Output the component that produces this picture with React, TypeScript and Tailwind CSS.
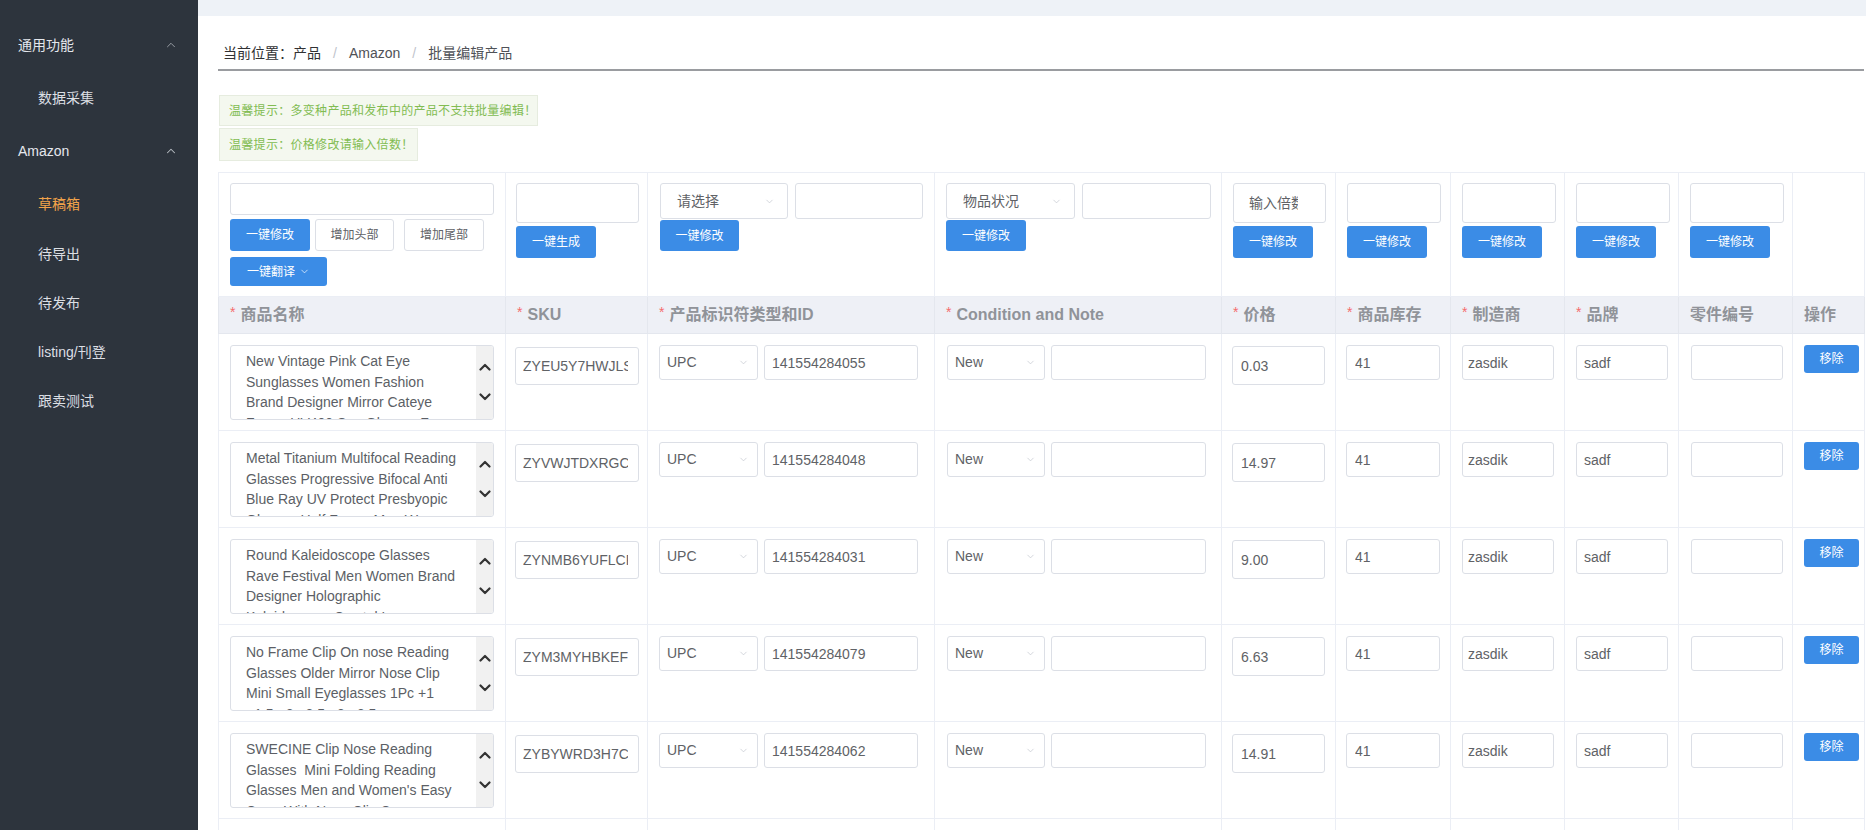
import { ChevronUp, ChevronDown } from "lucide-react";

type Row = {
  title: string;
  sku: string;
  id: string;
  price: string;
};

const rows: Row[] = [
  {
    title:
      "New Vintage Pink Cat Eye Sunglasses Women Fashion Brand Designer Mirror Cateye Frame UV400 Sun Glasses For Female",
    sku: "ZYEU5Y7HWJLS8Q",
    id: "141554284055",
    price: "0.03",
  },
  {
    title:
      "Metal Titanium Multifocal Reading Glasses Progressive Bifocal Anti Blue Ray UV Protect Presbyopic Glasses Half Frame Men Women",
    sku: "ZYVWJTDXRGC5K",
    id: "141554284048",
    price: "14.97",
  },
  {
    title:
      "Round Kaleidoscope Glasses Rave Festival Men Women Brand Designer Holographic Kaleidoscope Crystal Lens Sunglasses",
    sku: "ZYNMB6YUFLCP",
    id: "141554284031",
    price: "9.00",
  },
  {
    title:
      "No Frame Clip On nose Reading Glasses Older Mirror Nose Clip Mini Small Eyeglasses 1Pc +1 +1.5 +2 +2.5 +3 +3.5",
    sku: "ZYM3MYHBKEF6",
    id: "141554284079",
    price: "6.63",
  },
  {
    title:
      "SWECINE Clip Nose Reading Glasses  Mini Folding Reading Glasses Men and Women's Easy Carry With Nose Clip Case",
    sku: "ZYBYWRD3H7CK",
    id: "141554284062",
    price: "14.91",
  },
  {
    title: "Retro Round Metal Frame Sunglasses Men Women Vintage Mirror Lens",
    sku: "ZYQ8KD2LMX4T",
    id: "141554284086",
    price: "5.20",
  },
];

function Field({ value, className }: { value: string; className: string }) {
  return (
    <input
      readOnly
      value={value}
      className={
        "block border border-[#dcdfe6] rounded-[3px] bg-white text-[14px] text-[#606266] outline-none " +
        className
      }
    />
  );
}

function Select({ label, className }: { label: string; className: string }) {
  return (
    <div
      className={
        "flex items-center justify-between border border-[#dcdfe6] rounded-[3px] bg-white text-[14px] text-[#606266] " +
        className
      }
    >
      <span>{label}</span>
      <ChevronDown size={11} strokeWidth={1.5} className="text-[#c0c4cc]" />
    </div>
  );
}

function BlueBtn({ label, className }: { label: string; className: string }) {
  return (
    <button
      className={
        "flex items-center justify-center rounded-[3px] bg-[#3b8ce6] text-[12px] text-white " + className
      }
    >
      {label}
    </button>
  );
}

function Star() {
  return <span className="relative -top-[3px] mr-[5px] text-[14px] font-normal text-[#f56c6c]">*</span>;
}

function Arrow({ up }: { up: boolean }) {
  return (
    <svg width="12" height="8" viewBox="0 0 12 8" className="block">
      <polyline
        points={up ? "1.5,6.5 6,2 10.5,6.5" : "1.5,1.5 6,6 10.5,1.5"}
        fill="none"
        stroke="#333"
        strokeWidth="2.2"
        strokeLinecap="round"
        strokeLinejoin="round"
      />
    </svg>
  );
}

function FakeTextarea({ text }: { text: string }) {
  return (
    <div className="flex h-[75px] w-[264px] overflow-hidden rounded-[3px] border border-[#dcdfe6] bg-white">
      <div className="flex-1 overflow-hidden whitespace-pre-wrap pl-[15px] pr-[15px] pt-[5px] text-[14px] leading-[20.5px] text-[#5c5f66]">
        {text}
      </div>
      <div className="flex w-[17px] flex-col items-center gap-[22px] bg-[#f1f1f1] pt-[17px]">
        <Arrow up />
        <Arrow up={false} />
      </div>
    </div>
  );
}

const td = "border border-[#ebeef5] align-top";

export default function App() {
  return (
    <div className="flex h-screen w-full overflow-hidden font-['Liberation_Sans','Noto_Sans_CJK_SC',sans-serif]">
      {/* Sidebar */}
      <aside className="w-[198px] shrink-0 bg-[#2d343d] pt-[18px] text-[14px] text-[#e4e7ed]">
        <div className="flex h-[54px] items-center justify-between pl-[18px] pr-[20px]">
          <span>通用功能</span>
          <ChevronUp size={14} strokeWidth={1.5} className="text-[#a3a9b0]" />
        </div>
        <div className="flex h-[52px] items-center pl-[38px] text-[#dcdfe4]">数据采集</div>
        <div className="flex h-[54px] items-center justify-between pl-[18px] pr-[20px]">
          <span>Amazon</span>
          <ChevronUp size={14} strokeWidth={1.8} className="text-[#b9bec4]" />
        </div>
        <div className="flex h-[52px] items-center pl-[38px] text-[#f2a34a]">草稿箱</div>
        <div className="flex h-[49px] items-center pl-[38px] text-[#dcdfe4]">待导出</div>
        <div className="flex h-[49px] items-center pl-[38px] text-[#dcdfe4]">待发布</div>
        <div className="flex h-[49px] items-center pl-[38px] text-[#dcdfe4]">listing/刊登</div>
        <div className="flex h-[49px] items-center pl-[38px] text-[#dcdfe4]">跟卖测试</div>
      </aside>

      {/* Main */}
      <main className="flex min-w-0 flex-1 flex-col overflow-hidden bg-white">
        <div className="h-[16px] shrink-0 bg-[#eef2f7]" />
        <div className="pl-[20px] pr-[2px]">
          {/* Breadcrumb */}
          <div className="border-b-2 border-[#9a9ca0] pb-[6px] pl-[5px] pt-[27px] text-[14px] leading-[20px] text-[#303133]">
            <span>当前位置：产品</span>
            <span className="mx-[12px] text-[#c0c4cc]">/</span>
            <span className="text-[#4f5257]">Amazon</span>
            <span className="mx-[12px] text-[#c0c4cc]">/</span>
            <span className="text-[#4f5257]">批量编辑产品</span>
          </div>

          {/* Tips */}
          <div className="ml-[1px] mt-[24px] flex h-[31px] w-[319px] items-center border border-[#e6ecdf] bg-[#f4f8ef] pl-[9px] text-[12px] tracking-[0.3px] text-[#82bc52]">
            温馨提示：多变种产品和发布中的产品不支持批量编辑！
          </div>
          <div className="ml-[1px] mt-[2px] flex h-[33px] w-[199px] items-center border border-[#e6ecdf] bg-[#f4f8ef] pl-[9px] text-[12px] tracking-[0.3px] text-[#82bc52]">
            温馨提示：价格修改请输入倍数！
          </div>

          {/* Table */}
          <table className="mt-[11px] w-[1646px] table-fixed border-collapse">
            <colgroup>
              <col className="w-[287px]" />
              <col className="w-[142px]" />
              <col className="w-[287px]" />
              <col className="w-[287px]" />
              <col className="w-[114px]" />
              <col className="w-[115px]" />
              <col className="w-[114px]" />
              <col className="w-[114px]" />
              <col className="w-[114px]" />
              <col className="w-[72px]" />
            </colgroup>
            <tbody>
              {/* Bulk edit row */}
              <tr>
                <td className={td + " h-[124px] pl-[11px] pt-[10px]"}>
                  <Field value="" className="h-[32px] w-[264px]" />
                  <div className="mt-[4px] flex">
                    <BlueBtn label="一键修改" className="h-[32px] w-[80px]" />
                    <button className="ml-[5px] h-[32px] w-[79px] rounded-[3px] border border-[#dcdfe6] bg-white text-[12px] text-[#606266]">
                      增加头部
                    </button>
                    <button className="ml-[10px] h-[32px] w-[80px] rounded-[3px] border border-[#dcdfe6] bg-white text-[12px] text-[#606266]">
                      增加尾部
                    </button>
                  </div>
                  <button className="mt-[6px] flex h-[29px] w-[97px] items-center justify-center gap-[4px] rounded-[3px] bg-[#3b8ce6] text-[12px] text-white">
                    一键翻译
                    <ChevronDown size={11} strokeWidth={1.5} />
                  </button>
                </td>
                <td className={td + " pl-[10px] pt-[10px]"}>
                  <Field value="" className="h-[40px] w-[123px]" />
                  <BlueBtn label="一键生成" className="mt-[3px] h-[32px] w-[80px]" />
                </td>
                <td className={td + " pl-[12px] pt-[10px]"}>
                  <div className="flex gap-[7px]">
                    <Select label="请选择" className="h-[36px] w-[128px] pl-[16px] pr-[12px]" />
                    <Field value="" className="h-[36px] w-[128px]" />
                  </div>
                  <BlueBtn label="一键修改" className="mt-[1px] h-[31px] w-[79px]" />
                </td>
                <td className={td + " pl-[11px] pt-[10px]"}>
                  <div className="flex gap-[7px]">
                    <Select label="物品状况" className="h-[36px] w-[129px] pl-[16px] pr-[12px]" />
                    <Field value="" className="h-[36px] w-[129px]" />
                  </div>
                  <BlueBtn label="一键修改" className="mt-[1px] h-[31px] w-[80px]" />
                </td>
                {[0, 1, 2, 3, 4].map((i) => (
                  <td key={i} className={td + " pl-[11px] pt-[10px]"}>
                    {i === 0 ? (
                      <input
                        readOnly
                        placeholder="输入倍数"
                        className="block h-[40px] w-[93px] rounded-[3px] border border-[#dcdfe6] bg-white pl-[15px] pr-[27px] text-[14px] text-[#606266] outline-none placeholder:text-[#606266]"
                      />
                    ) : (
                      <Field value="" className="h-[40px] w-[94px]" />
                    )}
                    <BlueBtn label="一键修改" className="mt-[3px] h-[32px] w-[80px]" />
                  </td>
                ))}
                <td className={td} />
              </tr>

              {/* Header row */}
              <tr className="bg-[#eef0f6]">
                {[
                  ["商品名称", true],
                  ["SKU", true],
                  ["产品标识符类型和ID", true],
                  ["Condition and Note", true],
                  ["价格", true],
                  ["商品库存", true],
                  ["制造商", true],
                  ["品牌", true],
                  ["零件编号", false],
                  ["操作", false],
                ].map(([label, req], i) => (
                  <td
                    key={i}
                    className="h-[37px] border border-[#e4e7ee] pl-[11px] align-middle text-[16px] font-bold text-[#909399] whitespace-nowrap overflow-hidden"
                  >
                    {req ? <Star /> : null}
                    {label as string}
                  </td>
                ))}
              </tr>

              {/* Data rows */}
              {rows.map((r, idx) => (
                <tr key={idx}>
                  <td className={td + " h-[97px] pl-[11px] pt-[11px]"}>
                    <FakeTextarea text={r.title} />
                  </td>
                  <td className={td + " pl-[9px] pt-[13px]"}>
                    <Field value={r.sku} className="h-[38px] w-[124px] pl-[7px] pr-[10px]" />
                  </td>
                  <td className={td + " pl-[11px] pt-[11px]"}>
                    <div className="flex gap-[6px]">
                      <Select label="UPC" className="h-[35px] w-[99px] pl-[7px] pr-[8px]" />
                      <Field value={r.id} className="h-[35px] w-[154px] pl-[7px]" />
                    </div>
                  </td>
                  <td className={td + " pl-[12px] pt-[11px]"}>
                    <div className="flex gap-[6px]">
                      <Select label="New" className="h-[35px] w-[98px] pl-[7px] pr-[8px]" />
                      <Field value="" className="h-[35px] w-[155px]" />
                    </div>
                  </td>
                  <td className={td + " pl-[10px] pt-[12px]"}>
                    <Field value={r.price} className="h-[39px] w-[93px] pl-[8px]" />
                  </td>
                  <td className={td + " pl-[10px] pt-[11px]"}>
                    <Field value="41" className="h-[35px] w-[94px] pl-[8px]" />
                  </td>
                  <td className={td + " pl-[11px] pt-[11px]"}>
                    <Field value="zasdik" className="h-[35px] w-[92px] pl-[5px]" />
                  </td>
                  <td className={td + " pl-[11px] pt-[11px]"}>
                    <Field value="sadf" className="h-[35px] w-[92px] pl-[7px]" />
                  </td>
                  <td className={td + " pl-[12px] pt-[11px]"}>
                    <Field value="" className="h-[35px] w-[92px]" />
                  </td>
                  <td className={td + " pl-[11px] pt-[11px]"}>
                    <BlueBtn label="移除" className="h-[28px] w-[55px]" />
                  </td>
                </tr>
              ))}
            </tbody>
          </table>
        </div>
      </main>
    </div>
  );
}
